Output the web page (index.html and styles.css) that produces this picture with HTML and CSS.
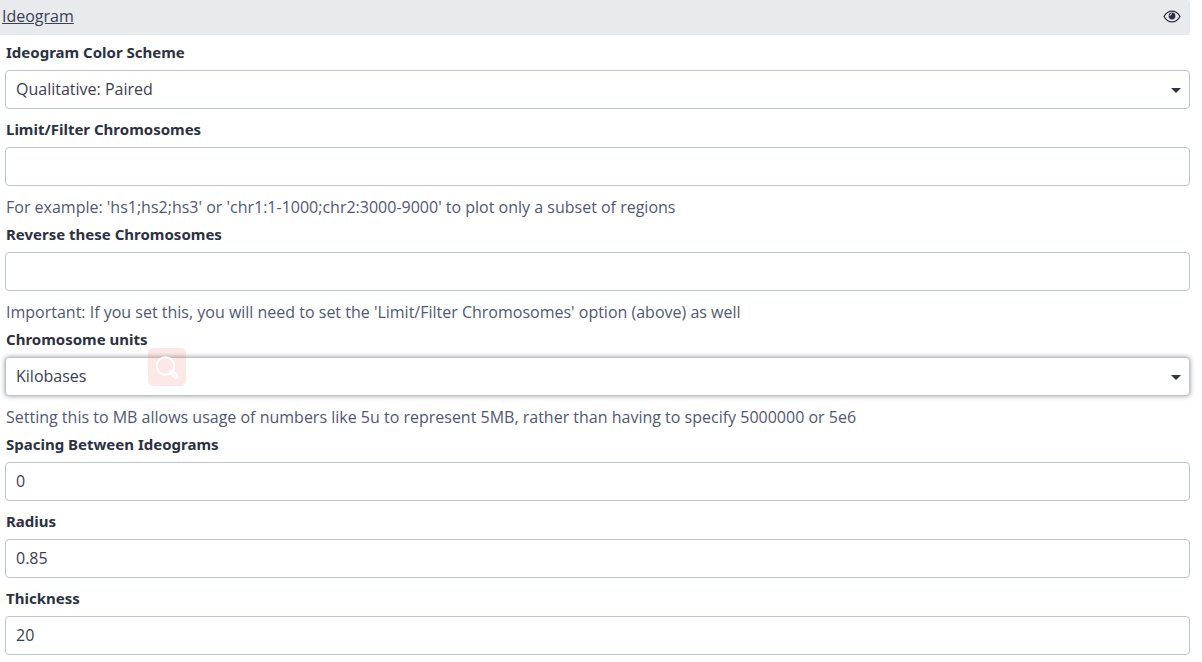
FILE: index.html
```
<!DOCTYPE html>
<html lang="en">
<head>
  <meta charset="UTF-8">
  <meta name="viewport" content="width=device-width, initial-scale=1.0">
  <title>Ideogram</title>
  <link rel="stylesheet" href="styles.css">
</head>
<body>

  <form class="section">
    <div class="section-header">
      <a class="section-title" href="#ideogram">Ideogram</a>
      <button class="toggle-btn" type="button" aria-label="Show or hide section">
        <svg width="18" height="14" viewBox="0 0 18 14">
          <path d="M1 7.500C3 3.800 5.800 2.100 9 2.100S15 3.800 17 7.500C15 11.200 12.200 12.900 9 12.900S3 11.200 1 7.500Z" fill="none" stroke="currentColor" stroke-width="1.300"/>
          <circle cx="9" cy="7" r="3.400" fill="currentColor"/>
          <path d="M6.900 6.900Q7.100 5 9 4.700" fill="none" stroke="#e7ebee" stroke-width="1"/>
        </svg>
      </button>
    </div>

    <div class="section-body" id="ideogram">
      <div class="form-row">
        <label for="color-scheme">Ideogram Color Scheme</label>
        <div class="select-wrap">
          <select class="field" id="color-scheme">
            <option>Qualitative: Paired</option>
          </select>
        </div>
      </div>

      <div class="form-row with-help">
        <label for="limit">Limit/Filter Chromosomes</label>
        <input class="field" type="text" id="limit">
        <p class="help">For example: 'hs1;hs2;hs3' or 'chr1:1-1000;chr2:3000-9000' to plot only a subset of regions</p>
      </div>

      <div class="form-row with-help">
        <label for="reverse">Reverse these Chromosomes</label>
        <input class="field" type="text" id="reverse">
        <p class="help">Important: If you set this, you will need to set the 'Limit/Filter Chromosomes' option (above) as well</p>
      </div>

      <div class="form-row with-help">
        <label for="units">Chromosome units</label>
        <div class="select-wrap">
          <select class="field active" id="units">
            <option>Kilobases</option>
          </select>
          <button class="search-badge" type="button" aria-label="Search">
            <svg width="24" height="24" viewBox="0 0 24 24" fill="none" stroke="#fff">
              <circle cx="10.500" cy="11" r="8.800" stroke-width="2"/>
              <path d="M17 17.500l4 4" stroke-width="5" stroke-linecap="round"/>
              <path d="M17.500 18l3 3" stroke="#fde9e9" stroke-width="1.500" stroke-linecap="round"/>
            </svg>
          </button>
        </div>
        <p class="help">Setting this to MB allows usage of numbers like 5u to represent 5MB, rather than having to specify 5000000 or 5e6</p>
      </div>

      <div class="form-row">
        <label for="spacing">Spacing Between Ideograms</label>
        <input class="field" type="text" id="spacing" value="0">
      </div>

      <div class="form-row">
        <label for="radius">Radius</label>
        <input class="field" type="text" id="radius" value="0.85">
      </div>

      <div class="form-row">
        <label for="thickness">Thickness</label>
        <input class="field" type="text" id="thickness" value="20">
      </div>
    </div>
  </form>

</body>
</html>
```

FILE: styles.css
```
* {
  box-sizing: border-box;
}

body {
  margin: 0;
  background: #fff;
  color: #2c3143;
  font-family: "Open Sans", "Noto Sans", sans-serif;
  font-size: 16px;
  line-height: 24px;
}

.section {
  margin-right: 12px;
}

.section-header {
  display: flex;
  justify-content: space-between;
  align-items: center;
  height: 35px;
  padding: 0 9px 4px 2px;
  background: #e7ebee;
  border-top-right-radius: 3px;
}

.section-title {
  color: #3c4052;
  text-decoration: underline;
}

.toggle-btn {
  display: flex;
  padding: 0;
  border: none;
  background: none;
  color: #2c3143;
  cursor: pointer;
}

.section-body {
  padding: 5px 0 0 5px;
}

.form-row {
  display: flex;
  flex-direction: column;
  margin-bottom: 8px;
}

.form-row:last-child {
  margin-bottom: 0;
}

.with-help {
  margin-bottom: 3px;
}

label {
  margin-bottom: 6px;
  padding-left: 1px;
  font-family: "Noto Sans", "Open Sans", sans-serif;
  font-size: 15px;
  font-weight: bold;
}

.field {
  display: block;
  width: 100%;
  height: 39px;
  padding: 0 10px 2px;
  border: 1px solid #bdc6d0;
  border-radius: 4px;
  background: #fff;
  color: #3c4052;
  font: inherit;
  appearance: none;
  outline: none;
}

.field.active {
  box-shadow: 0 0 5px rgba(0, 0, 0, 0.4);
}

.select-wrap {
  position: relative;
}

/* dropdown arrow */
.select-wrap::after {
  content: "";
  position: absolute;
  top: 18px;
  right: 9px;
  border: 5px solid transparent;
  border-top-color: #2c3143;
  border-bottom: none;
  pointer-events: none;
}

.help {
  margin: 9px 0 0;
  padding-left: 1px;
  color: #515875;
}

.search-badge {
  position: absolute;
  top: -9px;
  left: 143px;
  display: flex;
  justify-content: center;
  align-items: center;
  width: 38px;
  height: 38px;
  padding: 0;
  border: none;
  border-radius: 5px;
  background: rgba(245, 110, 110, 0.16);
  cursor: pointer;
}
```
